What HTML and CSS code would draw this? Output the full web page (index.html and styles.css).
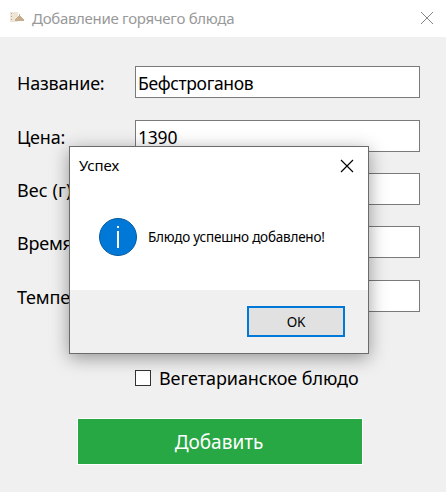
FILE: index.html
```html
<!DOCTYPE html>
<html lang="ru">
<head>
<meta charset="utf-8">
<title>Добавление горячего блюда</title>
<link rel="stylesheet" href="styles.css">
</head>
<body>
<div class="window">
  <header class="titlebar">
    <svg class="app-icon" width="15" height="12" viewBox="0 0 15 12"><path fill="#eee5d7" d="M1 0h8v10H1z"/><path fill="#b9a78e" d="M2 1h1v1H2zM2 4h1v1H2zM2 7h1v1H2z"/><path fill="#c7ad8d" d="M10 2h1v2h1v1h1v1h1v1h1v2H6V7h1V6h1V5h1V4h1z"/></svg>
    <span class="title">Добавление горячего блюда</span>
    <svg class="close" width="14" height="14" viewBox="0 0 14 14"><path d="M1 1l12 12M13 1L1 13" stroke="#858585"/></svg>
  </header>
  <main class="form">
    <div class="row"><span class="label">Название:</span><div class="field dish">Бефстроганов</div></div>
    <div class="row"><span class="label">Цена:</span><div class="field">1390</div></div>
    <div class="row"><span class="label weight">Вес (г):</span><div class="field"></div></div>
    <div class="row"><span class="label">Время:</span><div class="field"></div></div>
    <div class="row"><span class="label">Температура:</span><div class="field"></div></div>
  </main>
  <div class="check"><span class="box"></span><span class="check-text">Вегетарианское блюдо</span></div>
  <div class="submit"><span>Добавить</span></div>
</div>
<section class="dialog">
  <header class="dialog-head"><span class="dialog-title">Успех</span>
    <svg width="14" height="14" viewBox="0 0 14 14"><path d="M1 1l12 12M13 1L1 13" stroke="#000" stroke-width="1.15"/></svg>
  </header>
  <div class="dialog-body">
    <svg width="38" height="38" viewBox="0 0 38 38"><circle cx="19" cy="19" r="18.5" fill="#0078d7" stroke="#055a9e"/><path fill="#fff" d="M18 8h2v2h-2zM18 13h2v17h-2z"/></svg>
    <span class="message">Блюдо успешно добавлено!</span>
  </div>
  <footer class="dialog-foot"><div class="ok">OK</div></footer>
</section>
</body>
</html>
```
FILE: styles.css
```css
* { box-sizing: border-box; }
body { margin: 0; background: #f0f0f0; color: #000; font-family: "Noto Sans", "Open Sans", sans-serif; overflow: hidden; }
span { white-space: nowrap; }
.window { height: 492px; background: #f0f0f0; }
.titlebar { height: 37px; background: #fff; display: flex; align-items: center; padding: 0 12px 0 9px; }
.app-icon { margin-right: 8px; margin-top: -2px; }
.title { flex: 1; font-size: 15px; line-height: 20px; margin-top: -2px; color: #999; letter-spacing: -0.3px; }
.close { margin-top: -1px; }
.form { height: 246px; margin-top: 29px; padding: 0 26px 0 17px; display: grid; grid-template-rows: 54px 53px 53px 54px 32px; }
.row { height: 32px; display: grid; grid-template-columns: 118px 285px; grid-template-rows: 32px; }
.label { font-size: 18px; line-height: 34px; letter-spacing: -0.2px; }
.weight { letter-spacing: 0.1px; }
.field { height: 32px; background: #fff; border: 1px solid #7a7a7a; padding-left: 2px; font-size: 17.5px; line-height: 32px; letter-spacing: -0.2px; }
.dish { letter-spacing: -0.35px; }
.check { height: 26px; margin: 53px 0 0 135px; display: flex; align-items: center; gap: 8px; }
.box { width: 16px; height: 16px; border: 1px solid #333; background: #fff; }
.check-text { font-size: 18px; letter-spacing: -0.08px; }
.submit { width: 286px; height: 47px; margin: 27px 0 0 77px; border: 1px solid #fff; background: #28a745; color: #fff; font-size: 19px; line-height: 47px; text-align: center; padding-right: 2px; }
.dialog { position: absolute; left: 69px; top: 146px; width: 300px; height: 208px; border: 1px solid #6b6b6b; background: #fff; box-shadow: 0 4px 17px rgba(0,0,0,.38); display: flex; flex-direction: column; }
.dialog-head { height: 37px; display: flex; justify-content: space-between; align-items: center; padding: 0 14px 0 9px; }
.dialog-title { font-size: 15px; letter-spacing: -0.1px; margin-top: -2px; }
.dialog-body { height: 106px; padding: 34px 0 0 29px; display: flex; align-items: flex-start; gap: 11px; }
.message { font-size: 13.5px; line-height: 20px; margin-top: 9px; letter-spacing: -0.22px; }
.dialog-foot { flex: 1; background: #f0f0f0; display: flex; justify-content: flex-end; padding: 16px 23px 0 0; }
.ok { width: 98px; height: 31px; border: 2px solid #0078d7; background: #e1e1e1; font-size: 13.5px; line-height: 28px; text-align: center; letter-spacing: -0.3px; }
```
